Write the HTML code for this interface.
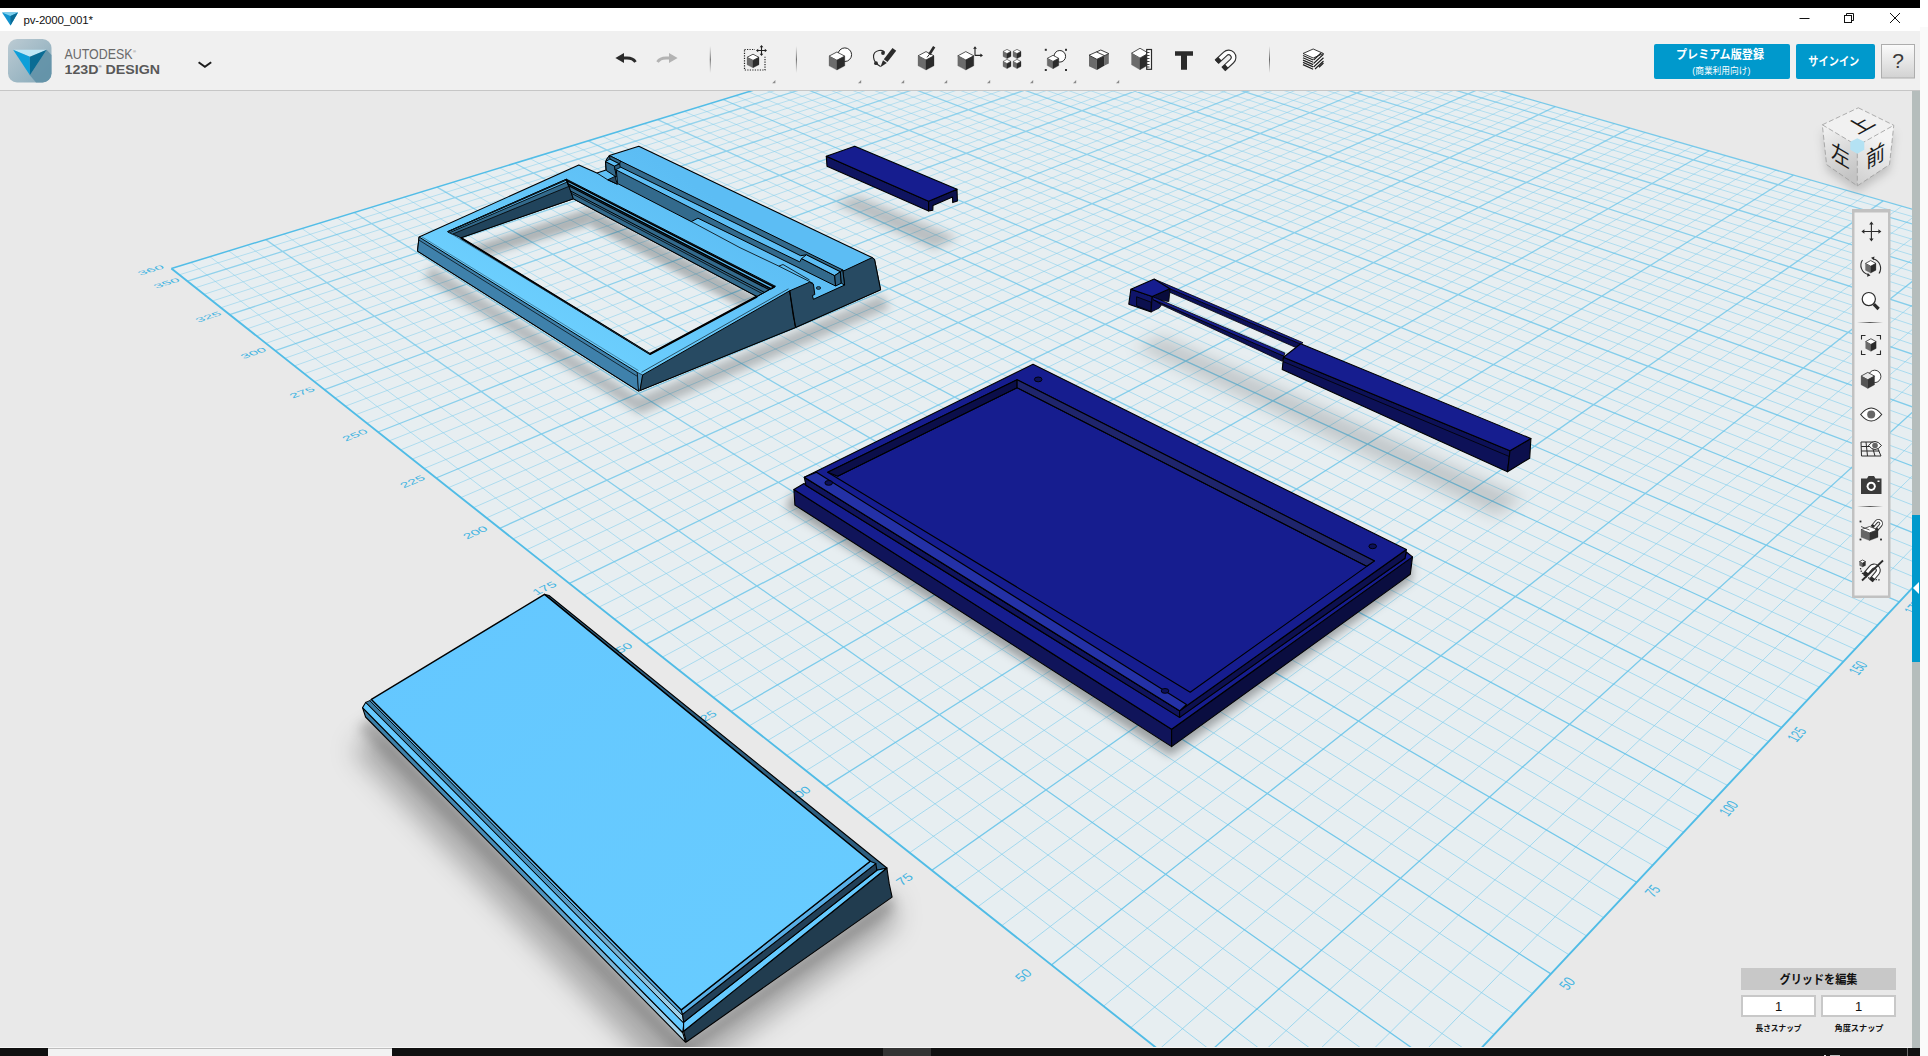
<!DOCTYPE html>
<html><head><meta charset="utf-8"><title>pv-2000_001*</title>
<style>
html,body{margin:0;padding:0;}
body{width:1928px;height:1056px;overflow:hidden;background:#fafafa;position:relative;font-family:"Liberation Sans","Noto Sans CJK JP",sans-serif;}
.abs{position:absolute;}
#vp{position:absolute;left:0;top:91px;width:1912px;height:957px;background:#e9e9e9;overflow:hidden;}
#vp svg{position:absolute;left:0;top:-91px;}
</style></head><body>
<div id="vp"><svg width="1928" height="1056" viewBox="0 0 1928 1056">
<polygon points="1343.1,1195.7 171.4,268.5 1114.0,-20.2 2191.9,289.6" fill="#e7eef1"/>
<defs><linearGradient id="gmin" gradientUnits="userSpaceOnUse" x1="950" y1="80" x2="1100" y2="1050"><stop offset="0" stop-color="#7fcdec" stop-opacity="0.48"/><stop offset="1" stop-color="#7fcdec" stop-opacity="0.7"/></linearGradient><linearGradient id="gmaj" gradientUnits="userSpaceOnUse" x1="950" y1="80" x2="1100" y2="1050"><stop offset="0" stop-color="#5cc0e8" stop-opacity="0.6"/><stop offset="1" stop-color="#5cc0e8" stop-opacity="0.88"/></linearGradient></defs>
<path d="M1310.1 1169.6L2169.3 283.1M1366.5 1170.8L190.8 262.5M1278.1 1144.3L2146.9 276.7M1389.2 1146.5L209.9 256.7M1247.0 1119.7L2124.9 270.3M1411.3 1122.9L228.8 250.9M1216.7 1095.7L2103.2 264.1M1432.8 1099.9L247.4 245.2M1158.6 1049.8L2060.7 251.9M1474.2 1055.7L283.9 234.0M1130.7 1027.7L2039.9 245.9M1494.1 1034.5L301.8 228.5M1103.6 1006.2L2019.3 240.0M1513.5 1013.8L319.5 223.1M1077.2 985.3L1999.1 234.2M1532.4 993.6L336.9 217.8M1026.3 945.0L1959.4 222.8M1568.9 954.7L371.1 207.3M1001.8 925.6L1940.0 217.2M1586.5 935.9L387.9 202.1M977.9 906.7L1920.8 211.7M1603.6 917.6L404.5 197.1M954.6 888.3L1901.9 206.2M1620.4 899.7L420.9 192.1M909.6 852.7L1864.8 195.6M1652.7 865.2L453.0 182.2M887.9 835.5L1846.6 190.3M1668.3 848.5L468.8 177.4M866.7 818.7L1828.6 185.2M1683.6 832.2L484.4 172.6M846.0 802.4L1810.9 180.1M1698.6 816.3L499.8 167.9M806.0 770.7L1776.1 170.1M1727.5 785.4L530.0 158.6M786.7 755.4L1759.1 165.2M1741.4 770.5L544.8 154.1M767.8 740.4L1742.2 160.3M1755.1 755.9L559.5 149.6M749.3 725.8L1725.6 155.6M1768.5 741.5L574.0 145.2M713.4 697.4L1692.9 146.2M1794.5 713.8L602.5 136.4M696.1 683.7L1676.9 141.6M1807.1 700.4L616.5 132.1M679.1 670.2L1661.0 137.0M1819.5 687.2L630.4 127.9M662.4 657.1L1645.4 132.5M1831.6 674.3L644.0 123.7M630.2 631.5L1614.6 123.7M1855.0 649.2L671.0 115.5M614.5 619.1L1599.6 119.3M1866.4 637.1L684.2 111.4M599.2 607.0L1584.6 115.0M1877.6 625.1L697.3 107.4M584.1 595.1L1569.9 110.8M1888.6 613.4L710.2 103.4M554.9 572.0L1540.9 102.5M1909.9 590.6L735.6 95.7M540.7 560.7L1526.7 98.4M1920.3 579.6L748.2 91.8M526.8 549.7L1512.6 94.3M1930.4 568.7L760.5 88.0M513.1 538.9L1498.7 90.3M1940.4 558.1L772.8 84.3M486.5 517.9L1471.3 82.5M1959.9 537.3L796.9 76.9M473.6 507.6L1457.8 78.6M1969.3 527.2L808.7 73.3M460.9 497.6L1444.5 74.8M1978.6 517.3L820.5 69.7M448.4 487.7L1431.4 71.0M1987.8 507.5L832.1 66.1M424.1 468.5L1405.5 63.6M2005.6 488.5L854.9 59.1M412.3 459.1L1392.8 59.9M2014.3 479.2L866.2 55.7M400.6 449.9L1380.2 56.3M2022.8 470.1L877.3 52.3M389.2 440.9L1367.7 52.7M2031.2 461.1L888.3 48.9M366.9 423.2L1343.2 45.6M2047.6 443.7L910.1 42.2M356.1 414.6L1331.1 42.2M2055.6 435.1L920.7 39.0M345.4 406.2L1319.2 38.7M2063.4 426.7L931.3 35.7M334.9 397.9L1307.4 35.4M2071.2 418.5L941.8 32.5M314.4 381.6L1284.1 28.7M2086.3 402.4L962.4 26.2M304.4 373.7L1272.6 25.4M2093.6 394.5L972.6 23.1M294.5 365.9L1261.3 22.1M2100.9 386.7L982.7 20.0M284.8 358.3L1250.1 18.9M2108.1 379.1L992.7 16.9M265.9 343.3L1228.0 12.5M2122.0 364.2L1012.3 10.9M256.6 335.9L1217.1 9.4M2128.9 356.9L1022.0 8.0M247.5 328.7L1206.3 6.3M2135.6 349.7L1031.6 5.0M238.5 321.6L1195.7 3.2M2142.2 342.6L1041.1 2.1M221.0 307.7L1174.6 -2.8M2155.2 328.8L1059.8 -3.6M212.4 301.0L1164.3 -5.8M2161.5 322.0L1069.1 -6.5M204.0 294.3L1154.0 -8.7M2167.8 315.4L1078.2 -9.3M195.6 287.7L1143.9 -11.6M2173.9 308.8L1087.3 -12.0M179.3 274.8L1123.9 -17.4M2186.0 295.9L1105.2 -17.5" stroke="url(#gmin)" stroke-width="1" fill="none"/>
<path d="M1187.3 1072.4L2081.8 257.9M1453.8 1077.5L265.8 239.6M1051.4 964.9L1979.1 228.4M1550.9 973.9L354.1 212.5M931.8 870.3L1883.2 200.9M1636.7 882.3L437.0 187.1M825.8 786.4L1793.4 175.1M1713.2 800.7L515.0 163.2M731.1 711.5L1709.2 150.8M1781.7 727.5L588.3 140.8M646.1 644.2L1629.9 128.1M1843.4 661.6L657.6 119.6M569.4 583.4L1555.3 106.6M1899.3 601.9L723.0 99.5M499.7 528.3L1484.9 86.4M1950.2 547.6L784.9 80.6M436.1 478.0L1418.4 67.3M1996.8 497.9L843.6 62.6M378.0 432.0L1355.4 49.2M2039.5 452.3L899.3 45.5M324.5 389.7L1295.7 32.0M2078.8 410.4L952.2 29.3M275.3 350.7L1239.0 15.7M2115.1 371.6L1002.5 13.9M229.7 314.6L1185.1 0.2M2148.7 335.7L1050.5 -0.8M187.4 281.2L1133.8 -14.5M2180.0 302.3L1096.3 -14.8" stroke="url(#gmaj)" stroke-width="1.3" fill="none"/>
<polyline points="1114.0,-20.2 171.4,268.5" fill="none" stroke="#52bde7" stroke-width="1.5"/>
<polyline points="171.4,268.5 1343.1,1195.7 2191.9,289.6" fill="none" stroke="#50bce6" stroke-width="1.9" stroke-linejoin="round"/>
<polyline points="1114.0,-20.2 2191.9,289.6" fill="none" stroke="#5cc0e8" stroke-width="1.3" stroke-opacity="0.8"/>
<g font-family="Liberation Sans, sans-serif" font-size="10" fill="#45b5e2"><text transform="matrix(1.479,-0.451,0.585,0.472,150.848,270.270)" text-anchor="middle" dominant-baseline="central">360</text>
<text transform="matrix(1.471,-0.457,0.593,0.479,166.709,283.085)" text-anchor="middle" dominant-baseline="central">350</text>
<text transform="matrix(1.450,-0.475,0.616,0.497,208.458,316.814)" text-anchor="middle" dominant-baseline="central">325</text>
<text transform="matrix(1.426,-0.493,0.640,0.517,253.484,353.191)" text-anchor="middle" dominant-baseline="central">300</text>
<text transform="matrix(1.401,-0.513,0.666,0.538,302.187,392.539)" text-anchor="middle" dominant-baseline="central">275</text>
<text transform="matrix(1.374,-0.535,0.694,0.561,355.037,435.237)" text-anchor="middle" dominant-baseline="central">250</text>
<text transform="matrix(1.345,-0.559,0.725,0.586,412.587,481.733)" text-anchor="middle" dominant-baseline="central">225</text>
<text transform="matrix(1.313,-0.585,0.759,0.613,475.495,532.557)" text-anchor="middle" dominant-baseline="central">200</text>
<text transform="matrix(1.277,-0.614,0.796,0.643,544.544,588.342)" text-anchor="middle" dominant-baseline="central">175</text>
<text transform="matrix(1.238,-0.646,0.837,0.676,620.679,649.853)" text-anchor="middle" dominant-baseline="central">150</text>
<text transform="matrix(1.195,-0.681,0.882,0.712,705.052,718.018)" text-anchor="middle" dominant-baseline="central">125</text>
<text transform="matrix(1.146,-0.720,0.932,0.753,799.074,793.980)" text-anchor="middle" dominant-baseline="central">100</text>
<text transform="matrix(1.092,-0.763,0.989,0.799,904.502,879.157)" text-anchor="middle" dominant-baseline="central">75</text>
<text transform="matrix(1.031,-0.813,1.053,0.850,1023.545,975.333)" text-anchor="middle" dominant-baseline="central">50</text>
<text transform="matrix(0.962,-0.869,1.125,0.909,1159.023,1084.788)" text-anchor="middle" dominant-baseline="central">25</text>
<text transform="matrix(0.802,-0.871,1.293,0.911,1470.706,1088.732)" text-anchor="middle" dominant-baseline="central">25</text>
<text transform="matrix(0.752,-0.817,1.344,0.855,1567.354,983.749)" text-anchor="middle" dominant-baseline="central">50</text>
<text transform="matrix(0.708,-0.769,1.390,0.805,1652.738,891.003)" text-anchor="middle" dominant-baseline="central">75</text>
<text transform="matrix(0.669,-0.727,1.431,0.761,1728.718,808.470)" text-anchor="middle" dominant-baseline="central">100</text>
<text transform="matrix(0.634,-0.689,1.467,0.721,1796.766,734.554)" text-anchor="middle" dominant-baseline="central">125</text>
<text transform="matrix(0.603,-0.655,1.500,0.686,1858.064,667.970)" text-anchor="middle" dominant-baseline="central">150</text>
<text transform="matrix(0.574,-0.624,1.530,0.653,1913.568,607.679)" text-anchor="middle" dominant-baseline="central">175</text>
<text transform="matrix(0.548,-0.596,1.557,0.624,1964.063,552.831)" text-anchor="middle" dominant-baseline="central">200</text>
<text transform="matrix(0.525,-0.570,1.582,0.597,2010.197,502.718)" text-anchor="middle" dominant-baseline="central">225</text>
<text transform="matrix(0.503,-0.546,1.605,0.572,2052.511,456.754)" text-anchor="middle" dominant-baseline="central">250</text></g>
<defs><filter id="b3" x="-60%" y="-60%" width="220%" height="220%"><feGaussianBlur stdDeviation="3"/></filter><filter id="b4" x="-60%" y="-60%" width="220%" height="220%"><feGaussianBlur stdDeviation="4"/></filter><filter id="b5" x="-60%" y="-60%" width="220%" height="220%"><feGaussianBlur stdDeviation="5"/></filter><filter id="b6" x="-60%" y="-60%" width="220%" height="220%"><feGaussianBlur stdDeviation="6"/></filter><filter id="b8" x="-60%" y="-60%" width="220%" height="220%"><feGaussianBlur stdDeviation="8"/></filter><filter id="b13" x="-60%" y="-60%" width="220%" height="220%"><feGaussianBlur stdDeviation="13"/></filter></defs>
<polygon points="380.0,728.0 686.0,1040.0 892.0,893.0 897.0,925.0 672.0,1088.0 352.0,750.0" fill="#000" fill-opacity="0.27" filter="url(#b13)"/>
<polygon points="372.0,716.0 686.0,1040.0 892.0,893.0 893.0,910.0 682.0,1058.0 358.0,728.0" fill="#000" fill-opacity="0.22" filter="url(#b6)"/>
<polygon points="794.0,492.0 1172.0,734.0 1412.0,560.0 1412.0,580.0 1170.0,756.0 786.0,508.0" fill="#000" fill-opacity="0.32" filter="url(#b5)"/>
<polygon points="834.0,203.0 858.0,196.0 958.0,238.0 934.0,249.0" fill="#000" fill-opacity="0.2" filter="url(#b5)"/>
<polygon points="1135.0,347.0 1162.0,336.0 1524.0,498.0 1496.0,516.0" fill="#000" fill-opacity="0.16" filter="url(#b8)"/>
<polygon points="463.0,249.0 590.0,208.0 590.0,225.0 463.0,263.0" fill="#000" fill-opacity="0.24" filter="url(#b3)"/>
<polygon points="590.0,208.0 762.0,299.0 752.0,313.0 590.0,226.0" fill="#000" fill-opacity="0.24" filter="url(#b3)"/>
<polygon points="432.0,266.0 639.0,397.0 882.0,295.0 890.0,308.0 640.0,414.0 424.0,278.0" fill="#000" fill-opacity="0.22" filter="url(#b4)"/>
<polygon points="544.5,594.4 549.0,595.5 886.9,868.0 876.9,870.3 870.2,861.3" fill="#2e5f80" stroke="#000" stroke-width="1.1" stroke-linejoin="round"/>
<linearGradient id="gps" gradientUnits="userSpaceOnUse" x1="365" y1="705" x2="685" y2="1035"><stop offset="0" stop-color="#3a7da5"/><stop offset="0.55" stop-color="#4b93bf"/><stop offset="1" stop-color="#a8d8f0"/></linearGradient>
<polygon points="362.5,707.7 682.7,1032.5 685.6,1042.3 365.6,717.0" fill="url(#gps)" stroke="#000" stroke-width="1.1" stroke-linejoin="round"/>
<polygon points="365.8,702.3 683.9,1023.1 682.7,1032.5 362.5,707.7" fill="#66caff" stroke="#000" stroke-width="1.1" stroke-linejoin="round"/>
<polygon points="369.8,700.6 682.7,1015.4 683.9,1023.1 365.8,702.3" fill="url(#gps)" stroke="#000" stroke-width="0.9" stroke-linejoin="round"/>
<polygon points="371.4,699.4 681.3,1009.9 682.7,1015.4 369.8,700.6" fill="#5bb4ec" stroke="#000" stroke-width="0.9" stroke-linejoin="round"/>
<polygon points="683.6,1031.2 886.9,868.0 889.2,883.7 892.1,897.1 686.3,1042.0" fill="#213c4f" stroke="#000" stroke-width="1.1" stroke-linejoin="round"/>
<polygon points="683.6,1022.2 876.9,870.3 886.9,868.0 683.6,1031.2" fill="#66caff" stroke="#000" stroke-width="1.1" stroke-linejoin="round"/>
<polygon points="682.5,1014.4 875.8,863.6 876.9,870.3 683.6,1022.2" fill="#224058" stroke="#000" stroke-width="1.1" stroke-linejoin="round"/>
<polygon points="681.3,1009.9 870.2,861.3 875.8,863.6 682.5,1014.4" fill="#58aee6" stroke="#000" stroke-width="1.1" stroke-linejoin="round"/>
<linearGradient id="gpl" x1="0" y1="0" x2="1" y2="1"><stop offset="0" stop-color="#64c7ff"/><stop offset="1" stop-color="#68ccff"/></linearGradient>
<polygon points="544.5,594.4 870.2,861.3 681.3,1009.9 371.4,699.4" fill="url(#gpl)" stroke="#000" stroke-width="1.4" stroke-linejoin="round"/>
<polygon points="793.9,489.5 1171.6,729.3 1171.6,746.6 794.9,505.1" fill="#10145a" stroke="#000" stroke-width="1.1" stroke-linejoin="round"/>
<polygon points="1171.6,729.3 1412.5,556.9 1410.3,574.2 1399.7,582.1 1171.6,746.6" fill="#0a0d40" stroke="#000" stroke-width="1.1" stroke-linejoin="round"/>
<polygon points="793.9,489.5 804.0,483.5 805.9,485.2 1179.6,717.4 1405.0,558.2 1406.4,552.0 1412.5,556.9 1171.6,729.3" fill="#161d8f" stroke="#000" stroke-width="1.1" stroke-linejoin="round"/>
<polygon points="804.3,477.3 1179.6,710.8 1179.6,717.4 805.9,485.2" fill="#10145e" stroke="#000" stroke-width="1.1" stroke-linejoin="round"/>
<polygon points="1179.6,710.8 1406.4,549.5 1405.0,558.2 1179.6,717.4" fill="#0d1050" stroke="#000" stroke-width="1.1" stroke-linejoin="round"/>
<polygon points="1033.0,364.3 1406.4,549.5 1179.6,710.8 804.3,477.3" fill="#161d8f" stroke="#000" stroke-width="1.1" stroke-linejoin="round"/>
<polygon points="804.3,477.3 1179.6,710.8 1186.5,704.5 816.5,472.3" fill="#2431a6" stroke="#000" stroke-width="1.1" stroke-linejoin="round"/>
<polygon points="1017.1,379.8 1374.5,560.9 1190.2,692.2 827.7,472.3" fill="#161d8f" stroke="#000" stroke-width="1.1" stroke-linejoin="round"/>
<polygon points="827.7,472.3 1017.1,379.8 1017.1,387.8 837.7,476.3" fill="#0b0e4a" stroke="#000" stroke-width="1.1" stroke-linejoin="round"/>
<polygon points="1017.1,379.8 1374.5,560.9 1366.6,566.2 1017.1,387.8" fill="#1f256c" stroke="#000" stroke-width="1.1" stroke-linejoin="round"/>
<polyline points="837.7,476.3 1017.1,387.8 1366.6,566.2" fill="none" stroke="#000" stroke-width="0.9" stroke-linejoin="round"/>
<ellipse cx="1038.2" cy="379.4" rx="3.8" ry="2.4" fill="#0c1058" stroke="#000" stroke-width="0.9"/>
<ellipse cx="828.7" cy="482.9" rx="3.8" ry="2.4" fill="#0c1058" stroke="#000" stroke-width="0.9"/>
<ellipse cx="1372.7" cy="546.3" rx="3.8" ry="2.4" fill="#0c1058" stroke="#000" stroke-width="0.9"/>
<ellipse cx="1165" cy="690.9" rx="3.8" ry="2.4" fill="#0c1058" stroke="#000" stroke-width="0.9"/>
<polygon points="826.3,156.2 928.6,201.3 928.6,210.9 827.0,166.2" fill="#0f1460" stroke="#000" stroke-width="1.1" stroke-linejoin="round"/>
<polygon points="928.6,201.3 957.0,189.2 957.4,201.0 952.7,202.6 952.5,197.0 933.0,205.5 932.8,210.2 928.6,210.9" fill="#0c104e" stroke="#000" stroke-width="1.1" stroke-linejoin="round"/>
<polygon points="826.3,156.2 854.7,146.3 957.0,189.2 928.6,201.3" fill="#161d8f" stroke="#000" stroke-width="1.1" stroke-linejoin="round"/>
<polygon points="1130.9,289.2 1152.2,296.5 1151.1,312.0 1128.8,304.2" fill="#10156a" stroke="#000" stroke-width="1.1" stroke-linejoin="round"/>
<polygon points="1136.6,296.8 1151.1,302.2 1151.1,311.5 1136.6,305.8" fill="#0c104e" stroke="#000" stroke-width="0.8" stroke-linejoin="round"/>
<polygon points="1152.2,296.5 1161.5,304.8 1159.4,307.9 1151.1,312.0" fill="#0d1158" stroke="#000" stroke-width="0.8" stroke-linejoin="round"/>
<polygon points="1152.2,296.5 1169.8,288.7 1169.8,292.3 1168.8,301.6 1161.0,300.3" fill="#090c3c" stroke="#000" stroke-width="0.8" stroke-linejoin="round"/>
<polygon points="1153.2,299.6 1283.9,356.1 1282.3,361.3 1161.5,304.8" fill="#0d1158" stroke="#000" stroke-width="0.8" stroke-linejoin="round"/>
<polygon points="1152.2,296.5 1284.9,353.0 1283.9,356.1 1153.2,299.6" fill="#161d8f" stroke="#000" stroke-width="0.8" stroke-linejoin="round"/>
<polygon points="1169.8,288.7 1301.0,344.2 1295.3,347.3 1169.8,292.3" fill="#0d1158" stroke="#000" stroke-width="0.8" stroke-linejoin="round"/>
<polygon points="1154.2,279.1 1303.0,342.7 1301.0,344.2 1169.8,288.7" fill="#161d8f" stroke="#000" stroke-width="0.8" stroke-linejoin="round"/>
<polygon points="1130.9,289.2 1154.2,279.1 1169.8,288.7 1152.2,296.5" fill="#161d8f" stroke="#000" stroke-width="1.1" stroke-linejoin="round"/>
<polygon points="1283.5,357.3 1510.0,450.8 1507.5,471.8 1282.2,369.6" fill="#0d1158" stroke="#000" stroke-width="1.1" stroke-linejoin="round"/>
<polyline points="1283.0,361.5 1509.3,456.5" fill="none" stroke="#000" stroke-width="0.8" stroke-linejoin="round"/>
<polygon points="1530.9,438.5 1529.7,458.2 1507.5,471.8 1510.0,450.8" fill="#0c0f4c" stroke="#000" stroke-width="1.1" stroke-linejoin="round"/>
<polygon points="1300.7,343.7 1530.9,438.5 1510.0,450.8 1283.5,357.3" fill="#161d8f" stroke="#000" stroke-width="1.1" stroke-linejoin="round"/>
<linearGradient id="gfr" gradientUnits="userSpaceOnUse" x1="640" y1="150" x2="520" y2="340"><stop offset="0" stop-color="#5cbdf4"/><stop offset="1" stop-color="#6ed1ff"/></linearGradient>
<path d="M419.1 237.0 L578.8 165.0 L596.9 173.0 L606.0 170.1 L605.5 161.6 L609.4 155.6 L638.8 146.3 L872.1 257.6 L874.5 259.5 L880.6 289.8 L795.6 327.4 L638.6 391.0 L417.5 251.1Z M460.9 237.8 L573.4 198.8 L757.0 296.5 L650.0 354.0Z" fill="url(#gfr)" fill-rule="evenodd" stroke="#000" stroke-width="1.1" stroke-linejoin="round"/>
<polygon points="419.1,237.0 637.3,372.4 638.6,391.0 417.5,251.1" fill="#3f81ab" stroke="#000" stroke-width="1.0" stroke-linejoin="round"/>
<polyline points="418.8,240.0 637.6,376.5" fill="none" stroke="#000" stroke-width="0.7" stroke-linejoin="round"/>
<polygon points="637.3,372.4 642.7,374.9 640.0,390.5 638.6,391.0" fill="#4a8fbb" stroke="#000" stroke-width="0.6" stroke-linejoin="round"/>
<polygon points="642.7,374.9 789.7,290.8 795.6,327.4 640.0,390.5" fill="#274a62" stroke="#000" stroke-width="1.0" stroke-linejoin="round"/>
<polygon points="789.7,290.8 809.6,282.2 813.4,284.1 814.8,294.5 812.4,295.5 813.4,299.3 844.6,285.1 842.7,269.9 843.5,271.0 872.1,257.6 874.5,259.5 880.6,289.8 795.6,327.4" fill="#274a62" stroke="#000" stroke-width="1.0" stroke-linejoin="round"/>
<polygon points="447.7,231.6 566.4,179.2 573.4,198.8 460.9,237.8" fill="#21445c" stroke="#000" stroke-width="1.0" stroke-linejoin="round"/>
<polygon points="447.7,231.6 566.4,179.2 568.6,186.5 452.2,234.2" fill="#336a8c" stroke="#000" stroke-width="0.8" stroke-linejoin="round"/>
<polygon points="448.0,232.0 566.6,180.0 567.2,182.0 449.2,232.8" fill="#5cbdf4" stroke="#000" stroke-width="0.9" stroke-linejoin="round"/>
<polygon points="566.4,179.2 775.4,286.3 757.0,296.5 573.4,198.8" fill="#336a8c" stroke="#000" stroke-width="1.0" stroke-linejoin="round"/>
<polygon points="566.9,180.6 774.1,287.0 771.0,288.7 568.1,183.9" fill="#5cbdf4" stroke="#000" stroke-width="1.6" stroke-linejoin="round"/>
<polyline points="568.7,185.7 769.3,289.7" fill="none" stroke="#000" stroke-width="1.2" stroke-linejoin="round"/>
<polyline points="570.6,191.0 764.4,292.4" fill="none" stroke="#000" stroke-width="1.0" stroke-linejoin="round"/>
<polyline points="571.4,193.3 762.2,293.6" fill="none" stroke="#000" stroke-width="0.8" stroke-linejoin="round"/>
<polyline points="460.9,237.8 650.0,354.0 757.0,296.5" fill="none" stroke="#000" stroke-width="2.0" stroke-linejoin="round"/>
<polyline points="775.4,286.3 757.0,296.5" fill="none" stroke="#000" stroke-width="1.0" stroke-linejoin="round"/>
<polygon points="609.4,155.6 842.7,269.9 840.4,271.8 806.3,254.8 800.6,255.7 740.0,225.4 606.0,160.0" fill="#336a8c" stroke="#000" stroke-width="1.0" stroke-linejoin="round"/>
<polygon points="605.5,161.6 614.5,166.1 616.3,177.0 606.3,170.5" fill="#336a8c" stroke="#000" stroke-width="1.0" stroke-linejoin="round"/>
<polygon points="605.5,161.6 610.0,159.0 619.7,163.9 614.5,166.1" fill="#5cbdf4" stroke="#000" stroke-width="0.9" stroke-linejoin="round"/>
<polygon points="614.5,166.1 619.7,163.9 620.2,167.5 615.0,170.0" fill="#2c5f80" stroke="#000" stroke-width="0.9" stroke-linejoin="round"/>
<polygon points="609.4,155.6 610.0,159.0 619.7,163.9 620.5,161.0" fill="#336a8c" stroke="#000" stroke-width="0.9" stroke-linejoin="round"/>
<polygon points="607.7,179.8 615.1,176.4 616.8,182.6 617.4,184.3" fill="#274a62" stroke="#000" stroke-width="0.9" stroke-linejoin="round"/>
<polyline points="596.9,173.0 607.7,179.8 617.4,184.3" fill="none" stroke="#000" stroke-width="0.9" stroke-linejoin="round"/>
<polygon points="616.3,170.0 740.0,233.0 799.7,261.9 801.6,258.6 834.7,275.6 835.6,286.0 740.0,238.7 697.9,218.2 691.3,221.6 617.5,183.5" fill="#336a8c" stroke="#000" stroke-width="1.0" stroke-linejoin="round"/>
<polygon points="801.6,258.6 806.3,254.8 840.4,271.8 834.7,275.6" fill="#5cbdf4" stroke="#000" stroke-width="1.0" stroke-linejoin="round"/>
<polygon points="834.7,275.6 840.4,271.8 841.3,283.2 835.6,286.0" fill="#2c5f80" stroke="#000" stroke-width="1.0" stroke-linejoin="round"/>
<polygon points="840.4,271.8 842.7,269.9 844.6,285.1 841.3,283.2" fill="#2c5f80" stroke="#000" stroke-width="1.0" stroke-linejoin="round"/>
<polyline points="691.3,221.6 740.0,247.7 778.8,266.1 812.9,283.2" fill="none" stroke="#000" stroke-width="0.8" stroke-linejoin="round"/>
<polyline points="778.8,266.1 783.0,264.5 809.6,280.0" fill="none" stroke="#000" stroke-width="0.8" stroke-linejoin="round"/>
<ellipse cx="818.5" cy="288" rx="2.2" ry="1.4" fill="#336a8c" stroke="#000" stroke-width="0.7"/>
<polyline points="789.7,290.8 793.0,315.0 795.6,327.4" fill="none" stroke="#000" stroke-width="0.9" stroke-linejoin="round"/>
<polyline points="447.7,231.6 649.9,353.9" fill="none" stroke="#1b3a50" stroke-width="0.6" stroke-linejoin="round"/>
<polyline points="641.5,372.3 788.5,288.8" fill="none" stroke="#000" stroke-width="0.6" stroke-linejoin="round"/>
<polyline points="421.5,236.6 638.5,370.6" fill="none" stroke="#1b3a50" stroke-width="0.5" stroke-linejoin="round"/>
</svg></div>
<!-- top black strip -->
<div class="abs" style="left:0;top:0;width:1920px;height:8px;background:#000"></div>
<div class="abs" style="left:1920px;top:0;width:8px;height:27px;background:#fff"></div>
<!-- title bar -->
<div class="abs" style="left:0;top:8px;width:1920px;height:23px;background:#fff"></div>
<svg class="abs" style="left:0;top:8px" width="24" height="23" viewBox="0 8 24 23"><polygon points="2,12.5 18,12.5 10.5,25.5" fill="#1193cf"/><polygon points="2,12.5 18,12.5 10.5,16" fill="#7ed0ee"/><polygon points="18,12.5 10.5,16 10.5,25.5" fill="#0b6a94"/></svg>
<div class="abs" style="left:23.500px;top:12.700px;font-size:11.5px;color:#111;line-height:14px;letter-spacing:-0.2px">pv-2000_001*</div>
<!-- window controls -->
<svg class="abs" style="left:1780px;top:8px" width="140" height="23" viewBox="1780 8 140 23" fill="none" stroke="#111" stroke-width="1"><path d="M1799.5 18.5h10"/><rect x="1844.500" y="15.500" width="7" height="7"/><path d="M1846.500 15.5v-2h7v7h-2"/><path d="M1890 13l10 10M1900 13l-10 10"/></svg>
<!-- toolbar -->
<div class="abs" style="left:0;top:31px;width:1920px;height:59px;background:#f0f0f0;border-bottom:1px solid #c6c6c6"></div>
<!-- right strip -->
<div class="abs" style="left:1912px;top:91px;width:8px;height:957px;background:#b5bdbc"></div>
<div class="abs" style="left:1912px;top:515px;width:8px;height:147px;background:#0099cc"></div>
<svg class="abs" style="left:1912px;top:580px" width="8" height="16"><polygon points="1,8 7,2 7,14" fill="#fff"/></svg>
<!-- taskbar -->
<div class="abs" style="left:0;top:1048px;width:1920px;height:8px;background:#101010"></div>
<div class="abs" style="left:48px;top:1048px;width:344px;height:8px;background:#f2f2f2;border-top:1px solid #bdbdbd;box-sizing:border-box"></div>
<div class="abs" style="left:883px;top:1048px;width:48px;height:8px;background:#333"></div>
<div class="abs" style="left:0;top:1047px;width:1912px;height:1px;background:#f6f6f6"></div>
<div class="abs" style="left:1907px;top:1048px;width:1px;height:8px;background:#6a6a6a"></div>
<div class="abs" style="left:1824px;top:1055px;width:2px;height:1px;background:#ddd"></div><div class="abs" style="left:1830px;top:1055px;width:10px;height:1px;background:#bbb"></div>
<svg class="abs" style="left:0;top:31px" width="1920" height="59" viewBox="0 31 1920 59">
<defs><linearGradient id="glogo" x1="0" y1="0" x2="1" y2="1"><stop offset="0" stop-color="#bccbd3"/><stop offset="1" stop-color="#86a9b9"/></linearGradient><linearGradient id="gsep" x1="0" y1="0" x2="0" y2="1"><stop offset="0" stop-color="#777" stop-opacity="0"/><stop offset="0.5" stop-color="#666" stop-opacity="1"/><stop offset="1" stop-color="#777" stop-opacity="0"/></linearGradient><linearGradient id="ghelp" x1="0" y1="0" x2="0" y2="1"><stop offset="0" stop-color="#fbfbfb"/><stop offset="1" stop-color="#d2d2d2"/></linearGradient></defs>
<rect x="8" y="39" width="43.500" height="43.500" rx="9" fill="url(#glogo)"/>
<path d="M46.700 49.800L51.500 55V73.500a9 9 0 0 1 -9 9H36L29.900 75.300Z" fill="#5e8fa6" opacity="0.85"/>
<polygon points="13.100,49.800 46.700,49.800 29.900,56.700" fill="#bfe7f5"/>
<polygon points="13.100,49.800 29.900,56.700 29.900,75.300" fill="#0d9fd9"/>
<polygon points="46.700,49.800 29.900,56.700 29.900,75.300" fill="#0a6c94"/>
<text x="64.500" y="58.500" font-family="Liberation Sans, sans-serif" font-size="13.900" fill="#6a6a6a" textLength="68" lengthAdjust="spacingAndGlyphs">AUTODESK</text>
<text x="133" y="52.500" font-family="Liberation Sans, sans-serif" font-size="4" fill="#6a6a6a">®</text>
<text x="64.500" y="73.700" font-family="Liberation Sans, sans-serif" font-size="13.400" font-weight="bold" fill="#585858" textLength="95.500" lengthAdjust="spacingAndGlyphs">123D<tspan font-size="4" dy="-6">®</tspan><tspan dy="6"> DESIGN</tspan></text>
<polyline points="198.600,62.300 204.900,66.700 211.200,62.300" fill="none" stroke="#1d1d1d" stroke-width="2"/>
<polygon points="615.400,58 624,53 624,63" fill="#2b2b2b"/><path d="M623.500 58h3.500q6 0 8.500 4" fill="none" stroke="#2b2b2b" stroke-width="2.800"/>
<polygon points="677.600,58 669,53 669,63" fill="#b3b3b3"/><path d="M669.500 58h-3.500q-6 0 -8.500 4" fill="none" stroke="#b3b3b3" stroke-width="2.800"/>
<rect x="709.8" y="46" width="1" height="27" fill="url(#gsep)"/>
<rect x="795.9" y="46" width="1" height="27" fill="url(#gsep)"/>
<rect x="1269.0" y="46" width="1" height="27" fill="url(#gsep)"/>
<rect x="744.500" y="49.500" width="20.500" height="20.500" fill="none" stroke="#222" stroke-width="1.200" stroke-dasharray="1.200 1.300"/>
<rect x="755" y="45" width="13" height="11.500" fill="#f0f0f0"/>
<polygon points="753.00,54.20 759.00,57.33 753.00,60.46 747.00,57.33" fill="#fff" stroke="#2b2b2b" stroke-width="0.8" stroke-linejoin="round"/><polygon points="747.00,57.33 753.00,60.46 753.00,67.80 747.00,64.67" fill="#6b6b6b" stroke="#6b6b6b" stroke-width="0.3"/><polygon points="753.00,60.46 759.00,57.33 759.00,64.67 753.00,67.80" fill="#2b2b2b" stroke="#2b2b2b" stroke-width="0.3"/>
<path d="M761.500 46.200v8.600M757.200 50.500h8.600" stroke="#222" stroke-width="1.100" fill="none"/><path d="M761.500 45l1.800 2.200h-3.600zM761.500 56l1.800-2.200h-3.600zM756 50.500l2.200-1.800v3.600zM767 50.500l-2.200-1.800v3.600z" fill="#222"/>
<polygon points="775.4000000000001,80 775.4000000000001,83.2 772.2,83.2" fill="#8a8a8a"/>
<circle cx="844.800" cy="54.700" r="6.800" fill="#fff" stroke="#2b2b2b" stroke-width="1"/>
<polygon points="836.90,52.00 844.80,56.14 836.90,60.28 829.00,56.14" fill="#fff" stroke="#2b2b2b" stroke-width="0.8" stroke-linejoin="round"/><polygon points="829.00,56.14 836.90,60.28 836.90,70.00 829.00,65.86" fill="#6b6b6b" stroke="#6b6b6b" stroke-width="0.3"/><polygon points="836.90,60.28 844.80,56.14 844.80,65.86 836.90,70.00" fill="#2b2b2b" stroke="#2b2b2b" stroke-width="0.3"/>
<polygon points="861.2,80 861.2,83.2 858,83.2" fill="#8a8a8a"/>
<path d="M880.500 66.500C872 62 871 52 879 50.500c3-0.500 5 0.500 5.500 2" fill="none" stroke="#2b2b2b" stroke-width="1.100"/><circle cx="883" cy="53" r="1.900" fill="#2b2b2b"/><circle cx="876" cy="63.200" r="1.900" fill="#2b2b2b"/>
<polygon points="892.500,48 896.200,50.800 887.500,62 883.800,59.200" fill="#2b2b2b"/><polygon points="883,60.300 886.800,63.100 880.300,67.200" fill="#2b2b2b"/>
<polygon points="904.2,80 904.2,83.2 901,83.2" fill="#8a8a8a"/>
<polygon points="926.00,51.60 934.00,55.83 926.00,60.06 918.00,55.83" fill="#fff" stroke="#2b2b2b" stroke-width="0.8" stroke-linejoin="round"/><polygon points="918.00,55.83 926.00,60.06 926.00,70.00 918.00,65.77" fill="#6b6b6b" stroke="#6b6b6b" stroke-width="0.3"/><polygon points="926.00,60.06 934.00,55.83 934.00,65.77 926.00,70.00" fill="#2b2b2b" stroke="#2b2b2b" stroke-width="0.3"/>
<path d="M934.200 46.800L929.300 54.500" stroke="#2b2b2b" stroke-width="2.600"/><path d="M929.300 54.500l-2.200 2.800" stroke="#2b2b2b" stroke-width="1"/>
<polygon points="947.2,80 947.2,83.2 944,83.2" fill="#8a8a8a"/>
<polygon points="965.80,51.60 973.80,55.83 965.80,60.06 957.80,55.83" fill="#fff" stroke="#2b2b2b" stroke-width="0.8" stroke-linejoin="round"/><polygon points="957.80,55.83 965.80,60.06 965.80,70.00 957.80,65.77" fill="#6b6b6b" stroke="#6b6b6b" stroke-width="0.3"/><polygon points="965.80,60.06 973.80,55.83 973.80,65.77 965.80,70.00" fill="#2b2b2b" stroke="#2b2b2b" stroke-width="0.3"/>
<path d="M975 55.800V48M975 55.400h6.500" stroke="#222" stroke-width="1.100" fill="none"/><path d="M975 46.200l1.900 2.600h-3.800zM983 55.400l-2.600-1.900v3.800z" fill="#222"/>
<polygon points="990.2,80 990.2,83.2 987,83.2" fill="#8a8a8a"/>
<polygon points="1007.00,49.40 1011.00,51.52 1007.00,53.63 1003.00,51.52" fill="#fff" stroke="#2b2b2b" stroke-width="0.6" stroke-linejoin="round"/><polygon points="1003.00,51.52 1007.00,53.63 1007.00,58.60 1003.00,56.48" fill="#6b6b6b" stroke="#6b6b6b" stroke-width="0.3"/><polygon points="1007.00,53.63 1011.00,51.52 1011.00,56.48 1007.00,58.60" fill="#2b2b2b" stroke="#2b2b2b" stroke-width="0.3"/>
<polygon points="1017.00,49.40 1021.00,51.52 1017.00,53.63 1013.00,51.52" fill="#fff" stroke="#2b2b2b" stroke-width="0.6" stroke-linejoin="round"/><polygon points="1013.00,51.52 1017.00,53.63 1017.00,58.60 1013.00,56.48" fill="#6b6b6b" stroke="#6b6b6b" stroke-width="0.3"/><polygon points="1017.00,53.63 1021.00,51.52 1021.00,56.48 1017.00,58.60" fill="#2b2b2b" stroke="#2b2b2b" stroke-width="0.3"/>
<polygon points="1007.00,59.40 1011.00,61.52 1007.00,63.63 1003.00,61.52" fill="#fff" stroke="#2b2b2b" stroke-width="0.6" stroke-linejoin="round"/><polygon points="1003.00,61.52 1007.00,63.63 1007.00,68.60 1003.00,66.48" fill="#6b6b6b" stroke="#6b6b6b" stroke-width="0.3"/><polygon points="1007.00,63.63 1011.00,61.52 1011.00,66.48 1007.00,68.60" fill="#2b2b2b" stroke="#2b2b2b" stroke-width="0.3"/>
<polygon points="1017.00,59.40 1021.00,61.52 1017.00,63.63 1013.00,61.52" fill="#fff" stroke="#2b2b2b" stroke-width="0.6" stroke-linejoin="round"/><polygon points="1013.00,61.52 1017.00,63.63 1017.00,68.60 1013.00,66.48" fill="#6b6b6b" stroke="#6b6b6b" stroke-width="0.3"/><polygon points="1017.00,63.63 1021.00,61.52 1021.00,66.48 1017.00,68.60" fill="#2b2b2b" stroke="#2b2b2b" stroke-width="0.3"/>
<polygon points="1033.2,80 1033.2,83.2 1030,83.2" fill="#8a8a8a"/>
<circle cx="1059.800" cy="56.300" r="5.800" fill="#fff" stroke="#2b2b2b" stroke-width="1"/>
<polygon points="1053.00,55.30 1058.80,58.38 1053.00,61.46 1047.20,58.38" fill="#fff" stroke="#2b2b2b" stroke-width="0.8" stroke-linejoin="round"/><polygon points="1047.20,58.38 1053.00,61.46 1053.00,68.70 1047.20,65.62" fill="#6b6b6b" stroke="#6b6b6b" stroke-width="0.3"/><polygon points="1053.00,61.46 1058.80,58.38 1058.80,65.62 1053.00,68.70" fill="#2b2b2b" stroke="#2b2b2b" stroke-width="0.3"/>
<rect x="1044.8" y="48.8" width="2" height="2" fill="#333"/>
<rect x="1065" y="48.8" width="2" height="2" fill="#333"/>
<rect x="1044.8" y="69" width="2" height="2" fill="#333"/>
<rect x="1065" y="69" width="2" height="2" fill="#333"/>
<polygon points="1076.2,80 1076.2,83.2 1073,83.2" fill="#8a8a8a"/>
<polygon points="1089,55.200 1096.900,59.300 1096.900,70 1089,66.200" fill="#6b6b6b"/><polygon points="1096.900,59.300 1104.600,55.700 1104.600,65.600 1096.900,70" fill="#2b2b2b"/><polygon points="1104.600,55.700 1108.800,53.600 1108.800,63.500 1104.600,65.600" fill="#6b6b6b"/><polygon points="1089,55.200 1100.800,50 1108.800,53.600 1096.900,59.300" fill="#fff" stroke="#2b2b2b" stroke-width="0.900" stroke-linejoin="round"/><path d="M1096.500 51.900l8.100 3.800" stroke="#2b2b2b" stroke-width="0.900"/>
<polygon points="1119.2,80 1119.2,83.2 1116,83.2" fill="#8a8a8a"/>
<polygon points="1140.00,48.25 1148.50,53.20 1140.00,58.14 1131.50,53.20" fill="#fff" stroke="#2b2b2b" stroke-width="0.8" stroke-linejoin="round"/><polygon points="1131.50,53.20 1140.00,58.14 1140.00,69.75 1131.50,64.81" fill="#6b6b6b" stroke="#6b6b6b" stroke-width="0.3"/><polygon points="1140.00,58.14 1148.50,53.20 1148.50,64.81 1140.00,69.75" fill="#2b2b2b" stroke="#2b2b2b" stroke-width="0.3"/>
<rect x="1146.700" y="49.500" width="4.800" height="19.800" fill="#fff" stroke="#2b2b2b" stroke-width="1.200"/><path d="M1147 52.500h2.500M1147 55.500h2.500M1147 58.500h2.500M1147 61.500h2.500M1147 64.500h2.500M1147 67h2.500" stroke="#2b2b2b" stroke-width="0.900"/>
<path d="M1175 51.200h18v4.500h-6v14h-6v-14h-6z" fill="#2b2b2b"/>
<g transform="translate(1227.800,58.200) rotate(47) scale(1.12)"><path d="M-6.500 9V-1a6.500 6.500 0 0 1 13 0V9h-4.200V-1a2.300 2.300 0 0 0 -4.600 0V9z" fill="#fff" stroke="#333" stroke-width="1"/><rect x="-6.500" y="5.500" width="4.200" height="4" fill="#2b2b2b"/><rect x="2.300" y="5.500" width="4.200" height="4" fill="#2b2b2b"/></g>
<g><polygon points="1313.200,49 1323.500,54 1323.500,64.500 1313.200,69.500 1303,64.500 1303,54" fill="#fff"/><polygon points="1313.200,49 1323.500,53.500 1313.200,58 1303,53.500" fill="#fff" stroke="#222" stroke-width="0.900"/><path d="M1303 55.500l10.200 4.500M1303 57.800l10.200 4.500M1303 60.100l10.200 4.500M1303 62.400l10.200 4.500M1303 64.600l10.200 4.600" stroke="#222" stroke-width="1.200"/><path d="M1313.600 60l7.500-7M1313.600 63.500l9.900-9.200M1313.600 67l9.900-9.300M1315 69l8.500-8M1319 67.200l4.500-4.200" stroke="#222" stroke-width="1.200"/></g>
<rect x="1654" y="44" width="136" height="35" rx="2" fill="#0099cc"/><rect x="1796" y="44" width="79" height="35" rx="2" fill="#0099cc"/>
<text x="1720" y="58.500" text-anchor="middle" font-family="Liberation Sans, Noto Sans CJK JP, sans-serif" font-size="12" font-weight="bold" fill="#fff" textLength="88" lengthAdjust="spacingAndGlyphs">プレミアム版登録</text>
<text x="1721.300" y="73.500" text-anchor="middle" font-family="Liberation Sans, Noto Sans CJK JP, sans-serif" font-size="9" fill="#fff" textLength="58" lengthAdjust="spacingAndGlyphs">(商業利用向け)</text>
<text x="1833.800" y="65.500" text-anchor="middle" font-family="Liberation Sans, Noto Sans CJK JP, sans-serif" font-size="12" font-weight="bold" fill="#fff" textLength="51" lengthAdjust="spacingAndGlyphs">サインイン</text>
<rect x="1881.500" y="44.500" width="33" height="33.500" fill="url(#ghelp)" stroke="#adadad" stroke-width="1"/>
<text x="1898" y="68" text-anchor="middle" font-family="Liberation Sans, sans-serif" font-size="21" fill="#3a3a3a">?</text>
</svg><svg class="abs" style="left:1700px;top:91px" width="220" height="957" viewBox="1700 91 220 957">
<defs><linearGradient id="gcl" x1="0" y1="0" x2="0.3" y2="1"><stop offset="0" stop-color="#f4f4f4"/><stop offset="1" stop-color="#c4c4c4"/></linearGradient><linearGradient id="gcr" x1="0" y1="0" x2="-0.3" y2="1"><stop offset="0" stop-color="#f4f4f4"/><stop offset="1" stop-color="#cbcbcb"/></linearGradient><filter id="cb6" x="-50%" y="-50%" width="200%" height="200%"><feGaussianBlur stdDeviation="5"/></filter><linearGradient id="gsep2" x1="0" y1="0" x2="1" y2="0"><stop offset="0" stop-color="#555" stop-opacity="0"/><stop offset="0.5" stop-color="#555"/><stop offset="1" stop-color="#555" stop-opacity="0"/></linearGradient></defs>
<polygon points="1822.3,124.8 1857.3,145.7 1893.8,125.3 1889.5,164.6 1857.3,185.9 1826.6,164.6" fill="#000" fill-opacity="0.18" filter="url(#cb6)" transform="translate(0,6)"/>
<polygon points="1858.3,107.8 1893.8,125.3 1857.3,145.7 1822.3,124.8" fill="#f1f1f1"/>
<polygon points="1822.3,124.8 1857.3,145.7 1857.3,185.9 1826.6,164.6" fill="url(#gcl)"/>
<polygon points="1857.3,145.7 1893.8,125.3 1889.5,164.6 1857.3,185.9" fill="url(#gcr)"/>
<path d="M1858.3,107.8L1893.8,125.3L1889.5,164.6L1857.3,185.9L1826.6,164.6L1822.3,124.8ZM1822.3,124.8L1857.3,145.7L1893.8,125.3M1857.3,145.7L1857.3,185.9" fill="none" stroke="#9c9c9c" stroke-width="0.8" stroke-dasharray="5 2.5"/>
<polygon points="1857.300,138.200 1864.300,141.700 1864.300,149.700 1857.300,153.700 1850.300,149.700 1850.300,141.700" fill="#b4e2f3"/>
<text transform="matrix(0.873,-0.488,0.858,0.512,1860.200,125.200)" font-family="Liberation Sans, Noto Sans CJK JP, sans-serif" font-size="22" fill="#1a1a1a" text-anchor="middle" y="8">上</text>
<text transform="matrix(0.858,0.512,0,1,1840.500,155.200)" font-family="Liberation Sans, Noto Sans CJK JP, sans-serif" font-size="22" fill="#1a1a1a" text-anchor="middle" y="8">左</text>
<text transform="matrix(0.873,-0.488,0,1,1875.500,155.500)" font-family="Liberation Sans, Noto Sans CJK JP, sans-serif" font-size="22" fill="#1a1a1a" text-anchor="middle" y="8">前</text>
<rect x="1852" y="209" width="38.500" height="389" fill="#c1c1c1"/><rect x="1854.500" y="212.500" width="33.500" height="383" fill="#efefef"/>
<path d="M1871.400 223.500v16M1863.400 231.500h16" stroke="#2b2b2b" stroke-width="1.100"/><path d="M1871.400 221.500l2.200 3h-4.400zM1871.400 241.500l2.200-3h-4.400zM1861.400 231.500l3-2.200v4.400zM1881.400 231.500l-3-2.200v4.400z" fill="#2b2b2b"/>
<polygon points="1870.70,260.55 1875.95,263.43 1870.70,266.30 1865.45,263.43" fill="#fff" stroke="#2b2b2b" stroke-width="0.8" stroke-linejoin="round"/><polygon points="1865.45,263.43 1870.70,266.30 1870.70,273.05 1865.45,270.18" fill="#6b6b6b" stroke="#6b6b6b" stroke-width="0.3"/><polygon points="1870.70,266.30 1875.95,263.43 1875.95,270.18 1870.70,273.05" fill="#2b2b2b" stroke="#2b2b2b" stroke-width="0.3"/>
<path d="M1862.500 260a9.500 9.500 0 0 0 5.500 14.500M1879 273.500a9.500 9.500 0 0 0 -5.500 -14.500" fill="none" stroke="#2b2b2b" stroke-width="1.100"/><path d="M1870.500 275.500l-3.500 1.200 0.800-3.600zM1871 257.800l3.500-1.200-0.800 3.600z" fill="#2b2b2b"/>
<circle cx="1868.800" cy="299.100" r="6.600" fill="#fff" stroke="#2b2b2b" stroke-width="1.200"/><path d="M1873.800 304.200l4.800 4.800" stroke="#2b2b2b" stroke-width="3.200"/>
<rect x="1857" y="322" width="26" height="1" fill="url(#gsep2)"/>
<polygon points="1870.90,338.75 1876.15,341.62 1870.90,344.50 1865.65,341.62" fill="#fff" stroke="#2b2b2b" stroke-width="0.8" stroke-linejoin="round"/><polygon points="1865.65,341.62 1870.90,344.50 1870.90,351.25 1865.65,348.38" fill="#6b6b6b" stroke="#6b6b6b" stroke-width="0.3"/><polygon points="1870.90,344.50 1876.15,341.62 1876.15,348.38 1870.90,351.25" fill="#2b2b2b" stroke="#2b2b2b" stroke-width="0.3"/>
<path d="M1861.500 339.500v-4h4M1876.500 335.500h4v4M1880.500 350.500v4h-4M1865.500 354.500h-4v-4" fill="none" stroke="#2b2b2b" stroke-width="1.100"/>
<circle cx="1874.700" cy="376.400" r="6.200" fill="#fff" stroke="#2b2b2b" stroke-width="0.900"/>
<polygon points="1867.80,372.40 1874.55,376.08 1867.80,379.76 1861.05,376.08" fill="#e8e8e8" stroke="#2b2b2b" stroke-width="0.8" stroke-linejoin="round"/><polygon points="1861.05,376.08 1867.80,379.76 1867.80,388.40 1861.05,384.72" fill="#555" stroke="#555" stroke-width="0.3"/><polygon points="1867.80,379.76 1874.55,376.08 1874.55,384.72 1867.80,388.40" fill="#333" stroke="#333" stroke-width="0.3"/>
<path d="M1860.700 414.500q10.500-13 21 0q-10.500 13-21 0z" fill="#fff" stroke="#2b2b2b" stroke-width="1.100"/><circle cx="1871.200" cy="414.500" r="4" fill="#666"/>
<path d="M1861 442h14l6 14h-19.500zM1861.200 446.500h16M1861.400 451h18M1866 442l1.500 14M1871 442l4 14" fill="none" stroke="#2b2b2b" stroke-width="1"/>
<path d="M1868.500 445.500q6.500-8 13 0q-6.500 8-13 0z" fill="#fff" stroke="#2b2b2b" stroke-width="1"/><circle cx="1875" cy="445.500" r="2.800" fill="#666"/>
<path d="M1861 478.500h6l1.500-2.500h5.500l1.500 2.500h6v15.500h-20.500z" fill="#3a3a3a"/><circle cx="1871.200" cy="486.300" r="4.600" fill="#fff"/><circle cx="1871.200" cy="486.300" r="2.600" fill="#3a3a3a"/><rect x="1877.500" y="480.500" width="2" height="1.500" fill="#fff"/>
<rect x="1857" y="506" width="26" height="1" fill="url(#gsep2)"/>
<polygon points="1869.50,526.50 1878.00,529.72 1869.50,532.94 1861.00,529.72" fill="#fff" stroke="#2b2b2b" stroke-width="0.8" stroke-linejoin="round"/><polygon points="1861.00,529.72 1869.50,532.94 1869.50,540.50 1861.00,537.28" fill="#666" stroke="#666" stroke-width="0.3"/><polygon points="1869.50,532.94 1878.00,529.72 1878.00,537.28 1869.50,540.50" fill="#333" stroke="#333" stroke-width="0.3"/>
<path d="M1861 526.500l8.500 3.500" stroke="#2b2b2b" stroke-width="0.800"/>
<g transform="translate(1878,524) rotate(40) scale(0.62)"><path d="M-6.500 9V-1a6.500 6.500 0 0 1 13 0V9h-4.200V-1a2.300 2.300 0 0 0 -4.600 0V9z" fill="#fff" stroke="#333" stroke-width="1.500"/><rect x="-6.500" y="5.500" width="4.200" height="4" fill="#2b2b2b"/><rect x="2.300" y="5.500" width="4.200" height="4" fill="#2b2b2b"/></g>
<rect x="1859.6" y="520.6" width="1.800" height="1.800" fill="#222"/>
<rect x="1859.6" y="538.6" width="1.800" height="1.800" fill="#222"/>
<rect x="1880.1" y="538.6" width="1.800" height="1.800" fill="#222"/>
<polygon points="1862.50,560.00 1865.50,561.61 1862.50,563.22 1859.50,561.61" fill="#fff" stroke="#2b2b2b" stroke-width="0.8" stroke-linejoin="round"/><polygon points="1859.50,561.61 1862.50,563.22 1862.50,567.00 1859.50,565.39" fill="#6b6b6b" stroke="#6b6b6b" stroke-width="0.3"/><polygon points="1862.50,563.22 1865.50,561.61 1865.50,565.39 1862.50,567.00" fill="#2b2b2b" stroke="#2b2b2b" stroke-width="0.3"/>
<g transform="translate(1873.500,571) rotate(40) scale(0.95)"><path d="M-6.500 9V-1a6.500 6.500 0 0 1 13 0V9h-4.200V-1a2.300 2.300 0 0 0 -4.600 0V9z" fill="#fff" stroke="#333" stroke-width="1.100"/><rect x="-6.500" y="5.500" width="4.200" height="4" fill="#2b2b2b"/><rect x="2.300" y="5.500" width="4.200" height="4" fill="#2b2b2b"/></g>
<path d="M1862 580.500L1883 560.500" stroke="#2b2b2b" stroke-width="1.800"/><path d="M1860.500 568q1 11 20 12" fill="none" stroke="#2b2b2b" stroke-width="1.300" stroke-dasharray="1.300 1.300"/>
<rect x="1741" y="968" width="155" height="22" fill="#c8c8c8"/>
<text x="1818.500" y="983.800" text-anchor="middle" font-family="Liberation Sans, Noto Sans CJK JP, sans-serif" font-size="12.500" font-weight="bold" fill="#111" textLength="78" lengthAdjust="spacingAndGlyphs">グリッドを編集</text>
<rect x="1742" y="996" width="73" height="20" fill="#fff" stroke="#c8c8c8" stroke-width="2"/><rect x="1822" y="996" width="73" height="20" fill="#fff" stroke="#c8c8c8" stroke-width="2"/>
<text x="1778.500" y="1011" text-anchor="middle" font-family="Liberation Sans, Noto Sans CJK JP, sans-serif" font-size="13" fill="#111">1</text><text x="1858.500" y="1011" text-anchor="middle" font-family="Liberation Sans, Noto Sans CJK JP, sans-serif" font-size="13" fill="#111">1</text>
<text x="1778.500" y="1031.300" text-anchor="middle" font-family="Liberation Sans, Noto Sans CJK JP, sans-serif" font-size="8.500" font-weight="bold" fill="#111" textLength="46" lengthAdjust="spacingAndGlyphs">長さスナップ</text>
<text x="1859" y="1031.300" text-anchor="middle" font-family="Liberation Sans, Noto Sans CJK JP, sans-serif" font-size="8.500" font-weight="bold" fill="#111" textLength="49" lengthAdjust="spacingAndGlyphs">角度スナップ</text>
</svg>
</body></html>
